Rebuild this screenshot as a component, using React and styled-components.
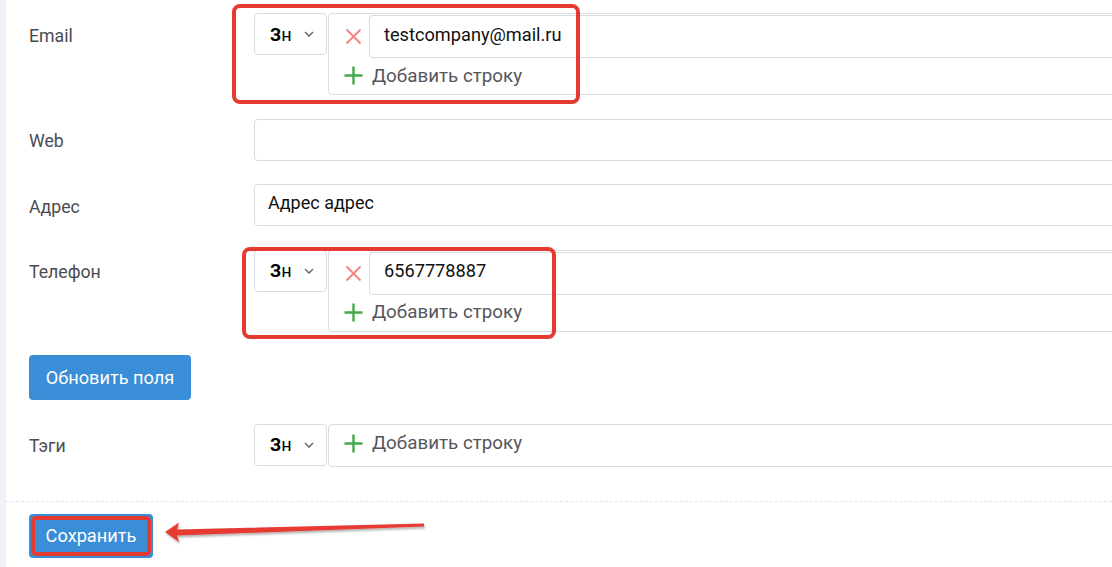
import React from 'react';
import styled, { createGlobalStyle } from 'styled-components';

const GlobalStyle = createGlobalStyle`
  html, body {
    margin: 0;
    padding: 0;
    background: #fff;
    overflow: hidden;
  }
  body {
    font-family: Roboto, "Noto Sans", Arial, sans-serif;
    -webkit-font-smoothing: antialiased;
  }
`;

const Page = styled.div`
  display: flex;
  width: 1112px;
  height: 567px;
  overflow: hidden;
  position: relative;
`;

const SideEdge = styled.div`
  width: 6px;
  flex: none;
  background: #f0f0f7;
`;

const Content = styled.div`
  flex: 1;
  min-width: 0;
`;

const Form = styled.div`
  padding: 13px 0 0 23px;
  display: flex;
  flex-direction: column;
  gap: 23.5px;
`;

const Row = styled.div`
  display: grid;
  grid-template-columns: 225px 1fr;
  align-items: start;
  margin-right: -60px;
`;

const Label = styled.div`
  height: 42px;
  box-sizing: border-box;
  padding-top: 3px;
  display: flex;
  align-items: center;
  font-size: 17.7px;
  color: #4a4b52;
`;

const TextInput = styled.div`
  height: 42px;
  box-sizing: border-box;
  border: 1px solid #d8dbe0;
  border-radius: 4px;
  display: flex;
  align-items: center;
  padding: 0 0 5px 13px;
  font-size: 18px;
  color: #111;
`;

const FieldGroup = styled.div`
  display: flex;
  align-items: flex-start;
  position: relative;
`;

const Select = styled.div`
  width: 73px;
  height: 42px;
  flex: none;
  box-sizing: border-box;
  border: 1px solid #d8dbe0;
  border-radius: 4px;
  display: flex;
  align-items: center;
  padding-left: 15px;
  gap: 12px;
  font-size: 18px;
  color: #000;

  b {
    font-weight: 700;
  }
`;

const ValuesBox = styled.div`
  flex: 1;
  margin-left: 1px;
  box-sizing: border-box;
  border: 1px solid #d8dbe0;
  border-radius: 4px;
  display: flex;
  flex-direction: column;
  padding-top: 1px;
`;

const ValueLine = styled.div`
  display: flex;
  align-items: center;
  padding-left: 16px;
  gap: 7px;
`;

const ValueInput = styled.div`
  flex: 1;
  height: 43px;
  box-sizing: border-box;
  border: 1px solid #d8dbe0;
  border-right: none;
  border-radius: 4px 0 0 4px;
  display: flex;
  align-items: center;
  padding: 0 0 5px 14px;
  font-size: 18.2px;
  color: #111;
`;

const AddLine = styled.div`
  height: ${(p) => (p.$solo ? 40 : 36)}px;
  box-sizing: border-box;
  padding-bottom: ${(p) => (p.$solo ? 5 : 1)}px;
  display: flex;
  align-items: center;
  padding-left: 15px;
  gap: 9px;
  font-size: 18.8px;
  color: #55565c;
`;

const Button = styled.div`
  position: relative;
  box-sizing: border-box;
  width: ${(p) => p.$width}px;
  height: ${(p) => p.$height}px;
  background: #3a8dd7;
  border-radius: 4px;
  display: flex;
  align-items: center;
  justify-content: center;
  color: #fff;
  font-size: 18.2px;
`;

const Footer = styled.div`
  margin-top: 34px;
  border-top: 1px dashed #e3e3f0;
  padding: 12px 0 0 23px;
`;

/* red marker frames drawn over highlighted fields */
const Marker = styled.div`
  position: absolute;
  top: ${(p) => p.$top}px;
  left: ${(p) => p.$left}px;
  width: ${(p) => p.$w}px;
  height: ${(p) => p.$h}px;
  box-sizing: border-box;
  border: 4px solid #e53a30;
  border-radius: ${(p) => p.$radius || 8}px;
  pointer-events: none;
`;

const ArrowLayer = styled.svg`
  position: absolute;
  left: 0;
  top: 0;
  width: 1112px;
  height: 567px;
  pointer-events: none;
`;

const Chevron = () => (
  <svg width="10" height="6" viewBox="0 0 10 6">
    <polyline points="1,1 5,5 9,1" fill="none" stroke="#6b6d73" strokeWidth="1.6" />
  </svg>
);

const RemoveIcon = () => (
  <svg width="17" height="17" viewBox="0 0 17 17">
    <path d="M1.5 1.5 L15.5 15.5 M15.5 1.5 L1.5 15.5" stroke="#f58585" strokeWidth="2" />
  </svg>
);

const PlusIcon = () => (
  <svg width="19" height="19" viewBox="0 0 19 19">
    <path d="M9.5 0.5 V18.5 M0.5 9.5 H18.5" stroke="#45a84a" strokeWidth="2.4" />
  </svg>
);

const KindSelect = () => (
  <Select>
    <span>
      <b>З</b>н
    </span>
    <Chevron />
  </Select>
);

const MultiField = ({ values, marker }) => (
  <FieldGroup>
    <KindSelect />
    <ValuesBox>
      {values.map((v) => (
        <ValueLine key={v}>
          <RemoveIcon />
          <ValueInput>{v}</ValueInput>
        </ValueLine>
      ))}
      <AddLine $solo={values.length === 0}>
        <PlusIcon />
        <span>Добавить строку</span>
      </AddLine>
    </ValuesBox>
    {marker && <Marker {...marker} />}
  </FieldGroup>
);

export default function App() {
  return (
    <>
      <GlobalStyle />
      <Page>
        <SideEdge />
        <Content>
          <Form>
            <Row>
              <Label>Email</Label>
              <MultiField
                values={['testcompany@mail.ru']}
                marker={{ $top: -9, $left: -22, $w: 348, $h: 100 }}
              />
            </Row>
            <Row>
              <Label>Web</Label>
              <TextInput />
            </Row>
            <Row>
              <Label>Адрес</Label>
              <TextInput>Адрес адрес</TextInput>
            </Row>
            <Row>
              <Label>Телефон</Label>
              <MultiField
                values={['6567778887']}
                marker={{ $top: -3, $left: -12, $w: 314, $h: 92 }}
              />
            </Row>
            <div>
              <Button $width={162} $height={45}>Обновить поля</Button>
            </div>
            <Row>
              <Label>Тэги</Label>
              <MultiField values={[]} />
            </Row>
          </Form>
          <Footer>
            <Button $width={124} $height={44}>
              Сохранить
              <Marker $top={2} $left={2} $w={120} $h={40} $radius={5} />
            </Button>
          </Footer>
        </Content>
        <ArrowLayer viewBox="0 0 1112 567">
          <defs>
            <filter id="arrowShadow" x="-5%" y="-50%" width="110%" height="200%">
              <feDropShadow dx="1" dy="2" stdDeviation="1" floodColor="#000" floodOpacity="0.3" />
            </filter>
          </defs>
          <path
            d="M165 532 L179 522.5 L177 529.5 L424 523.5 L424 526.5 L177 535.5 L179 542 Z"
            fill="#e53a30"
            filter="url(#arrowShadow)"
          />
        </ArrowLayer>
      </Page>
    </>
  );
}
